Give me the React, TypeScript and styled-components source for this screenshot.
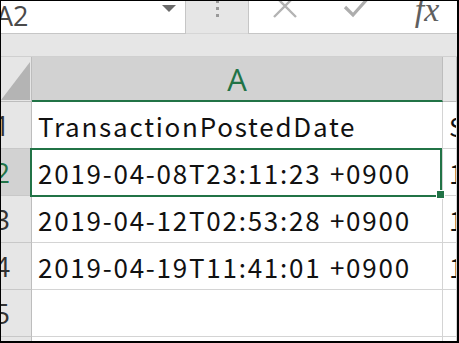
import React from "react";
import styled, { createGlobalStyle } from "styled-components";

const GlobalStyle = createGlobalStyle`
  html, body {
    margin: 0;
    padding: 0;
    background: #fff;
    overflow: hidden;
  }
`;

const Frame = styled.div`
  width: 459px;
  height: 343px;
  box-sizing: border-box;
  border: 1px solid #000;
  border-right-width: 2px;
  border-bottom-width: 2px;
  background: #e6e6e6;
  overflow: hidden;
  display: flex;
  flex-direction: column;
`;

const FormulaBar = styled.div`
  display: flex;
  height: 33px;
  flex-shrink: 0;
`;

const NameBox = styled.div`
  width: 185px;
  box-sizing: border-box;
  background: #fff;
  border-right: 1px solid #c6c6c6;
  border-bottom: 1px solid #c6c6c6;
  position: relative;
  overflow: hidden;
  display: flex;
  align-items: center;
  font-family: "Open Sans", "Noto Sans", sans-serif;
  font-size: 27px;
  color: #4a4a4a;
`;

const NameText = styled.span`
  margin-left: -5px;
  margin-top: -3px;
`;

const DropArrow = styled.span`
  position: absolute;
  right: 9px;
  top: 4px;
  width: 0;
  height: 0;
  border-left: 7px solid transparent;
  border-right: 7px solid transparent;
  border-top: 7px solid #6b6b6b;
`;

const Grip = styled.div`
  width: 62px;
  display: flex;
  flex-direction: column;
  align-items: center;
  gap: 4px;
  box-sizing: border-box;
  border-bottom: 1px solid #d6d6d6;
  & > i {
    width: 3px;
    height: 3px;
    background: #999;
  }
  & > i:first-child {
    height: 2px;
  }
`;

const FormulaBox = styled.div`
  flex: 1;
  background: #fff;
  border-left: 1px solid #c6c6c6;
  border-bottom: 1px solid #c6c6c6;
  display: flex;
  align-items: flex-end;
  padding-bottom: 14px;
  box-sizing: border-box;
  overflow: hidden;
`;

const IconSlot = styled.div<{ $w: number; $ml: number }>`
  width: ${(p) => p.$w}px;
  margin-left: ${(p) => p.$ml}px;
  display: flex;
  justify-content: center;
`;

const Fx = styled.span`
  font-family: "Liberation Serif", serif;
  font-style: italic;
  font-size: 34px;
  line-height: 30px;
  color: #5f5f5f;
  margin-bottom: -6px;
`;

const Spacer = styled.div`
  height: 22px;
  flex-shrink: 0;
  border-bottom: 1px solid #d0d0d0;
`;

const Sheet = styled.div`
  display: grid;
  grid-template-columns: 31px 411px 1fr;
  grid-template-rows: 45px repeat(6, 47px);
  background: #fff;
  font-family: "Noto Sans CJK JP", "Noto Sans", sans-serif;
`;

const Corner = styled.div`
  background: #e6e6e6;
  border-right: 1px solid #bdbdbd;
  border-bottom: 1px solid #bdbdbd;
  position: relative;
  box-sizing: border-box;
  &::after {
    content: "";
    position: absolute;
    right: 1px;
    bottom: 1px;
    width: 0;
    height: 0;
    border-left: 29px solid transparent;
    border-bottom: 38px solid #b4b4b4;
  }
`;

const ColHead = styled.div<{ $active?: boolean }>`
  background: ${(p) => (p.$active ? "#d2d2d2" : "#e6e6e6")};
  border-right: 1px solid #bdbdbd;
  border-bottom: ${(p) => (p.$active ? "2px solid #217346" : "1px solid #bdbdbd")};
  box-sizing: border-box;
  display: flex;
  align-items: center;
  justify-content: center;
  font-family: "Open Sans", "Noto Sans", sans-serif;
  font-size: 31px;
  color: ${(p) => (p.$active ? "#217346" : "#444")};
  padding-top: 1px;
`;

const RowHead = styled.div<{ $active?: boolean }>`
  background: ${(p) => (p.$active ? "#d2d2d2" : "#e6e6e6")};
  border-right: 1px solid #bdbdbd;
  border-bottom: 1px solid #c8c8c8;
  box-sizing: border-box;
  display: flex;
  align-items: center;
  justify-content: flex-end;
  padding-right: 21px;
  overflow: hidden;
  font-family: "Open Sans", "Noto Sans", sans-serif;
  font-size: 28px;
  color: ${(p) => (p.$active ? "#217346" : "#333")};
`;

const Cell = styled.div`
  border-right: 1px solid #d4d4d4;
  border-bottom: 1px solid #d4d4d4;
  box-sizing: border-box;
  display: flex;
  align-items: center;
  padding-left: 6px;
  white-space: nowrap;
  overflow: hidden;
  font-size: 26px;
  letter-spacing: 1.75px;
  word-spacing: 1px;
  color: #111;
  position: relative;
`;

const Selected = styled.div`
  position: absolute;
  left: -2px;
  top: -1px;
  right: 0;
  bottom: -2px;
  border: 2px solid #217346;
  pointer-events: none;
`;

const FillHandle = styled.div`
  position: absolute;
  right: -3px;
  bottom: -4px;
  width: 7px;
  height: 7px;
  background: #217346;
  border: 1px solid #fff;
`;

const SelCell = styled(Cell)`
  overflow: visible;
  z-index: 2;
`;

const rows: { n: number; a: string; b: string }[] = [
  { n: 1, a: "TransactionPostedDate", b: "S" },
  { n: 2, a: "2019-04-08T23:11:23 +0900", b: "1" },
  { n: 3, a: "2019-04-12T02:53:28 +0900", b: "1" },
  { n: 4, a: "2019-04-19T11:41:01 +0900", b: "1" },
  { n: 5, a: "", b: "" },
  { n: 6, a: "", b: "" },
];

export default function App() {
  return (
    <>
      <GlobalStyle />
      <Frame>
        <FormulaBar>
          <NameBox>
            <NameText>A2</NameText>
            <DropArrow />
          </NameBox>
          <Grip>
            <i />
            <i />
            <i />
          </Grip>
          <FormulaBox>
            <IconSlot $w={26} $ml={23}>
              <svg width="26" height="26" viewBox="0 0 26 26">
                <path d="M2 2 L24 24 M24 2 L2 24" stroke="#b3b3b3" strokeWidth="2.4" fill="none" />
              </svg>
            </IconSlot>
            <IconSlot $w={28} $ml={45}>
              <svg width="28" height="24" viewBox="0 0 28 24">
                <path d="M2 12 L10 20 L26 2" stroke="#adadad" strokeWidth="3.2" fill="none" />
              </svg>
            </IconSlot>
            <IconSlot $w={32} $ml={40}>
              <Fx>fx</Fx>
            </IconSlot>
          </FormulaBox>
        </FormulaBar>
        <Spacer />
        <Sheet>
          <Corner />
          <ColHead $active>A</ColHead>
          <ColHead />
          {rows.map((r) => (
            <React.Fragment key={r.n}>
              <RowHead $active={r.n === 2}>{r.n}</RowHead>
              {r.n === 2 ? (
                <SelCell>
                  {r.a}
                  <Selected />
                  <FillHandle />
                </SelCell>
              ) : (
                <Cell>{r.a}</Cell>
              )}
              <Cell>{r.b}</Cell>
            </React.Fragment>
          ))}
        </Sheet>
      </Frame>
    </>
  );
}
